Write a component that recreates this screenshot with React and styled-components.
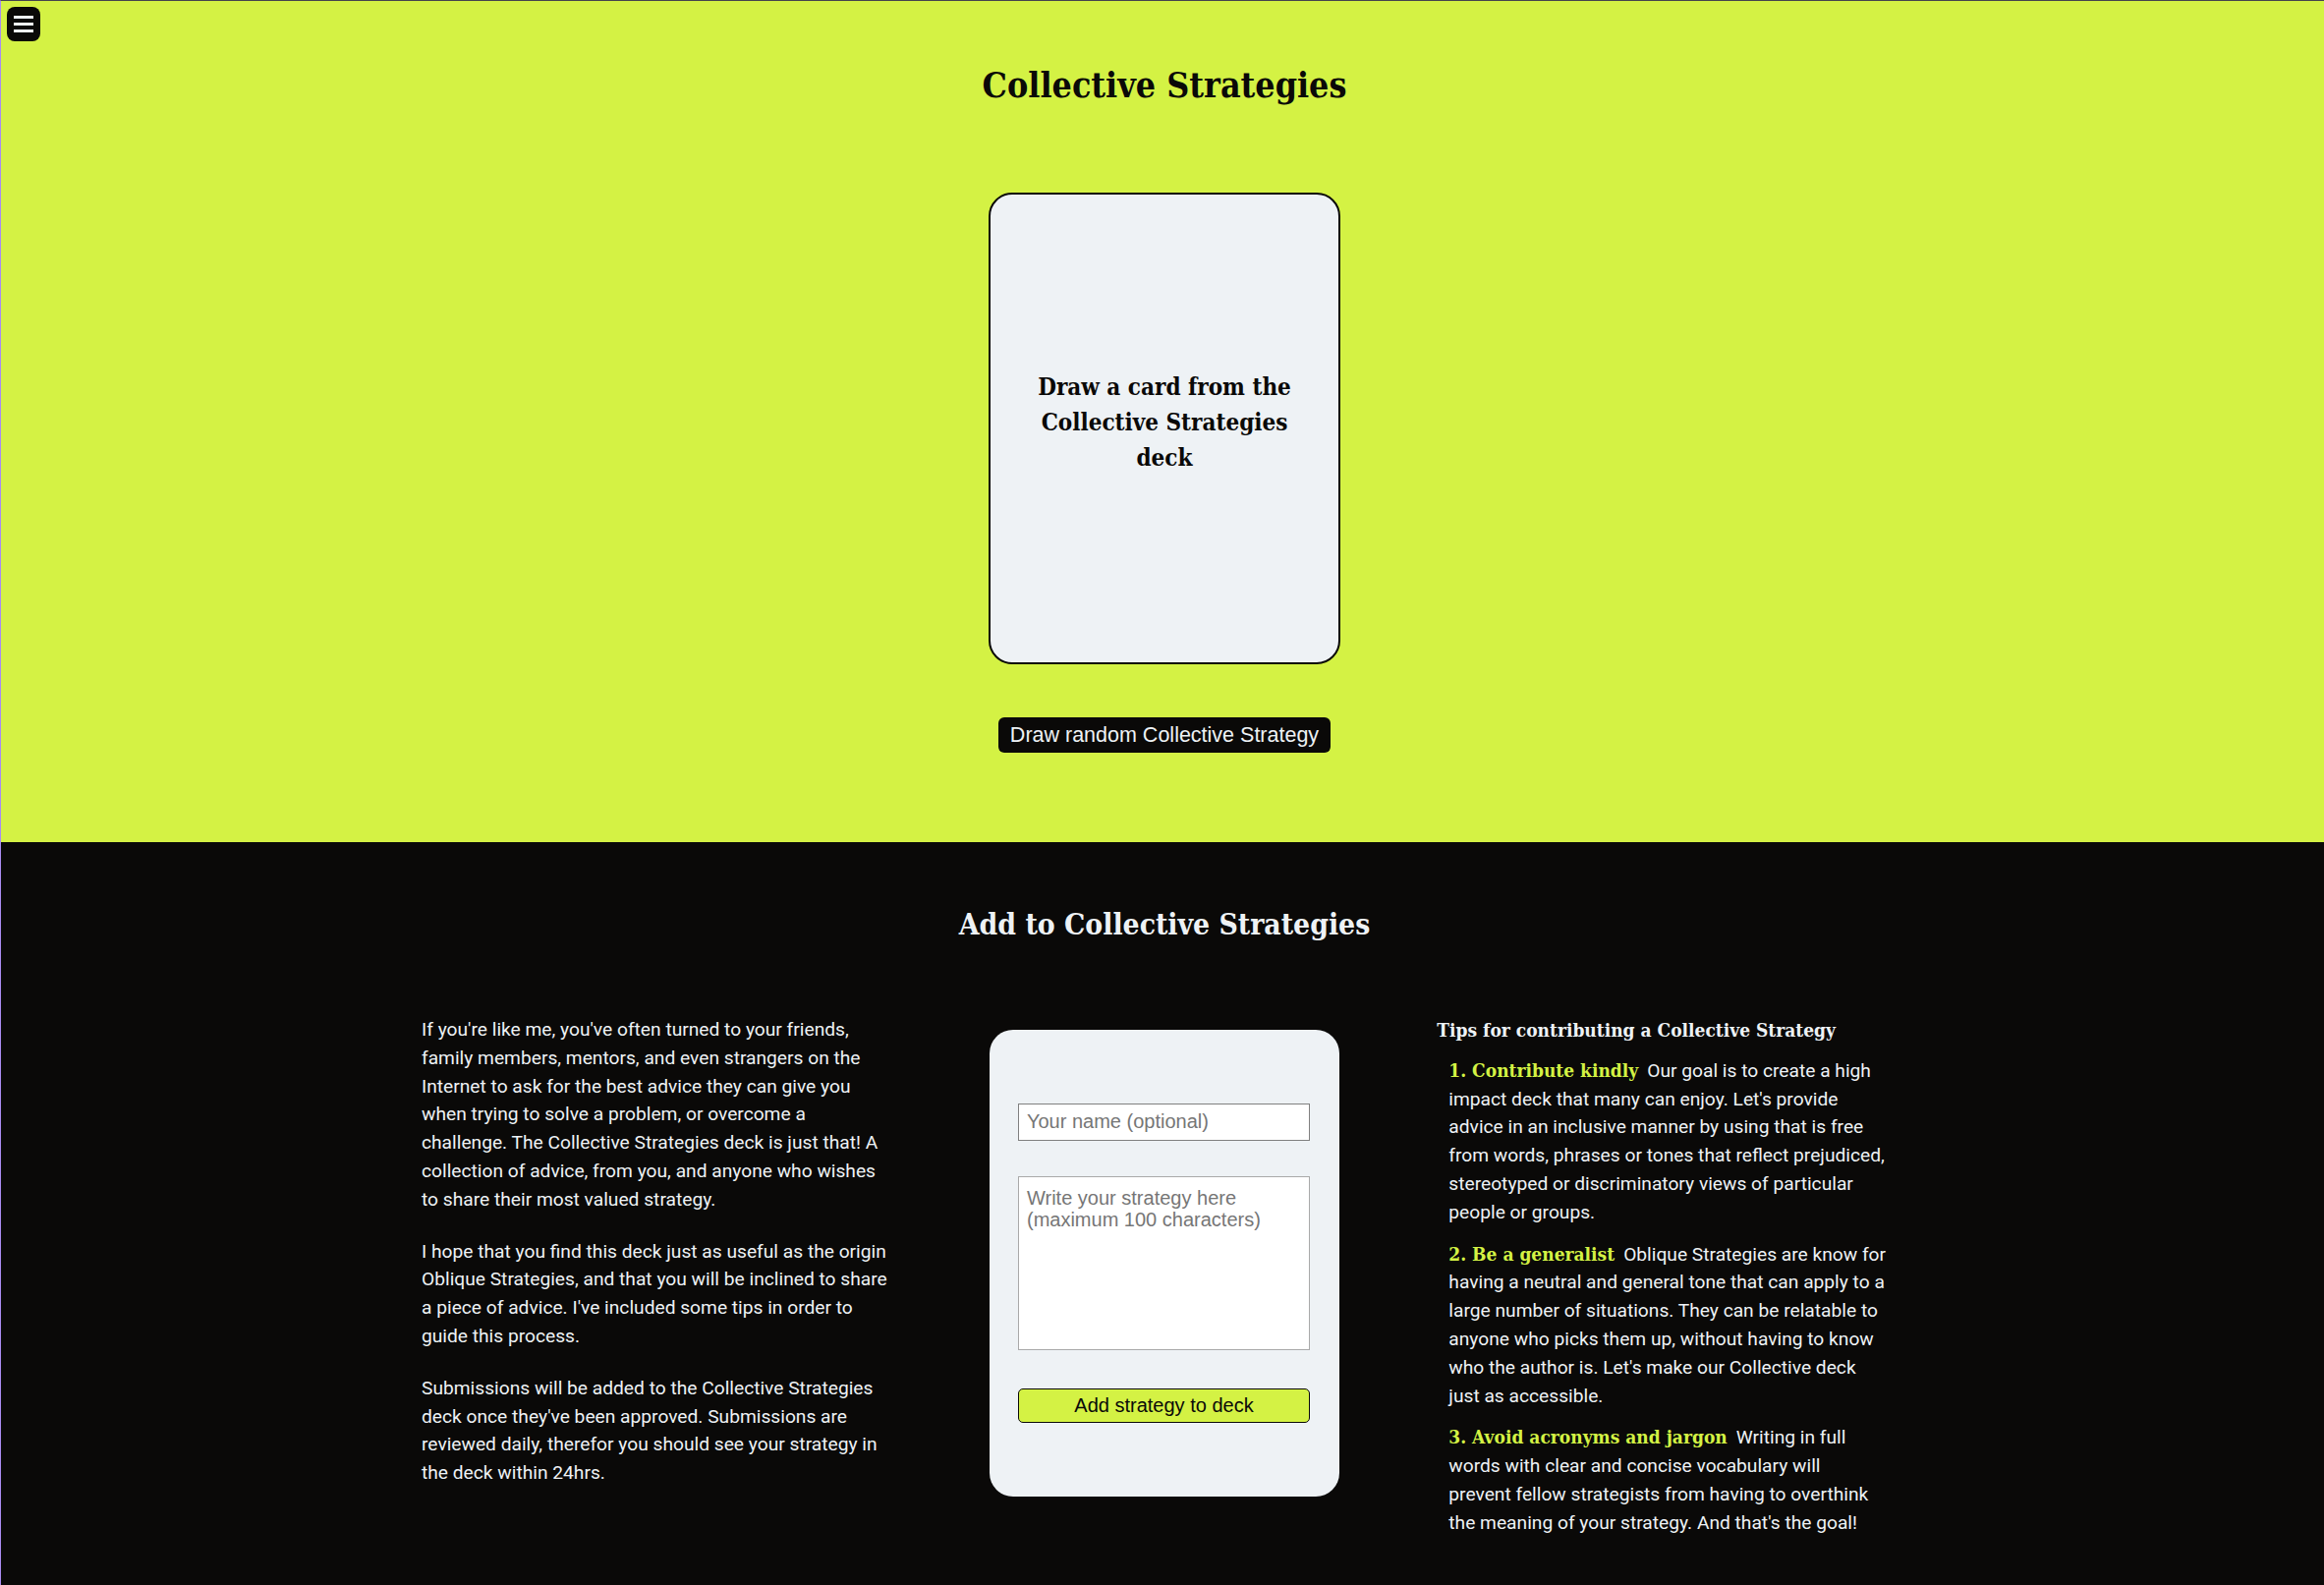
import React from "react";
import styled, { createGlobalStyle } from "styled-components";

const GREEN = "#d4f244";
const INK = "#0a0908";
const PAPER = "#eef2f5";

const serif = `"DejaVu Serif Condensed", "DejaVu Serif", "Liberation Serif", serif`;
const sans = `Roboto, "Noto Sans", Arial, sans-serif`;
const arial = `"Liberation Sans", Arial, sans-serif`;

const GlobalStyle = createGlobalStyle`
  * { box-sizing: border-box; }
  html, body { margin: 0; padding: 0; background: ${INK}; }
  body { font-family: ${sans}; }
`;

const Page = styled.div`
  position: relative;
  border-top: 1px solid #45454d;
  border-left: 1px solid #a98cf0;
  padding-left: 4px;
  min-height: 100vh;
  background: ${INK};
`;

const MenuButton = styled.button`
  position: absolute;
  top: 6px;
  left: 6px;
  width: 34px;
  height: 35px;
  border: none;
  border-radius: 8px;
  background: ${INK};
  padding: 0;
  display: flex;
  flex-direction: column;
  align-items: center;
  justify-content: center;
  gap: 4px;
  cursor: pointer;

  span {
    display: block;
    width: 20px;
    height: 3px;
    background: ${PAPER};
  }
`;

const Hero = styled.section`
  background: ${GREEN};
  margin-left: -4px;
  padding: 64px 0 91px 4px;
  display: flex;
  flex-direction: column;
  align-items: center;
`;

const Title = styled.h1`
  font-family: ${serif};
  font-weight: bold;
  font-size: 35.5px;
  line-height: 43px;
  color: ${INK};
  margin: 0 0 88px;
`;

const DeckCard = styled.div`
  width: 358px;
  height: 480px;
  border: 2px solid ${INK};
  border-radius: 24px;
  background: ${PAPER};
  display: flex;
  align-items: center;
  justify-content: center;
  padding: 0 44px 12px;
  text-align: center;
  font-family: ${serif};
  font-weight: bold;
  font-size: 24px;
  line-height: 36px;
  color: ${INK};
`;

const DrawButton = styled.button`
  margin-top: 54px;
  height: 36px;
  padding: 0 12px;
  border: none;
  border-radius: 6px;
  background: ${INK};
  color: ${PAPER};
  font-family: ${arial};
  font-size: 21.5px;
  cursor: pointer;
`;

const Contribute = styled.section`
  color: ${PAPER};
  padding: 66px 0 50px;
  display: flex;
  flex-direction: column;
  align-items: center;
`;

const SectionTitle = styled.h2`
  font-family: ${serif};
  font-weight: bold;
  font-size: 29.8px;
  line-height: 36px;
  margin: 0 0 75px;
`;

const Columns = styled.div`
  width: 1512px;
  display: grid;
  grid-template-columns: repeat(3, 1fr);
  column-gap: 32px;
  align-items: start;
`;

const Intro = styled.div`
  font-family: ${sans};
  font-size: 19.2px;
  line-height: 28.8px;

  p {
    margin: 0 0 24px;
  }
`;

const FormCard = styled.form`
  justify-self: center;
  margin-top: 14px;
  width: 356px;
  height: 475px;
  border-radius: 24px;
  background: ${PAPER};
  padding: 75px 30px 75px 29px;
  display: flex;
  flex-direction: column;
  gap: 36px;
`;

const field = `
  width: 297px;
  background: #fff;
  font-family: ${arial};
  font-size: 20px;
  color: ${INK};
  padding: 0 8px;
  outline: none;
  &::placeholder { color: #767676; }
`;

const NameInput = styled.input`
  ${field}
  height: 38px;
  border: 1px solid #808080;
`;

const StrategyInput = styled.textarea`
  ${field}
  height: 179px;
  border: 1px solid #a9a9a9;
  padding-top: 10px;
  line-height: 22.5px;
  resize: none;
`;

const AddButton = styled.button`
  margin-top: 3px;
  width: 297px;
  height: 35px;
  border: 1px solid ${INK};
  border-radius: 5px;
  background: ${GREEN};
  color: ${INK};
  font-family: ${arial};
  font-size: 20px;
  cursor: pointer;
`;

const Tips = styled.div`
  padding-left: 4px;
`;

const TipsTitle = styled.h3`
  font-family: ${serif};
  font-weight: bold;
  font-size: 19px;
  line-height: 28.8px;
  margin: 0 0 12px;
`;

const TipList = styled.ol`
  list-style: none;
  margin: 0;
  padding: 0 0 0 12px;
  max-width: 457.5px;
`;

const Tip = styled.li`
  font-family: ${sans};
  font-size: 19.2px;
  line-height: 28.8px;
  margin-bottom: 13px;
`;

const TipName = styled.strong`
  font-family: ${serif};
  font-weight: bold;
  font-size: 19px;
  color: ${GREEN};
  margin-right: 9px;
`;

const tips = [
  {
    name: "1. Contribute kindly",
    text: "Our goal is to create a high impact deck that many can enjoy. Let's provide advice in an inclusive manner by using that is free from words, phrases or tones that reflect prejudiced, stereotyped or discriminatory views of particular people or groups.",
  },
  {
    name: "2. Be a generalist",
    text: "Oblique Strategies are know for having a neutral and general tone that can apply to a large number of situations. They can be relatable to anyone who picks them up, without having to know who the author is. Let's make our Collective deck just as accessible.",
  },
  {
    name: "3. Avoid acronyms and jargon",
    text: "Writing in full words with clear and concise vocabulary will prevent fellow strategists from having to overthink the meaning of your strategy. And that's the goal!",
  },
];

const App = () => {
  return (
    <Page>
      <GlobalStyle />
      <MenuButton aria-label="Menu">
        <span />
        <span />
        <span />
      </MenuButton>

      <Hero>
        <Title>Collective Strategies</Title>
        <DeckCard>Draw a card from the Collective Strategies deck</DeckCard>
        <DrawButton>Draw random Collective Strategy</DrawButton>
      </Hero>

      <Contribute>
        <SectionTitle>Add to Collective Strategies</SectionTitle>
        <Columns>
          <Intro>
            <p>
              If you're like me, you've often turned to your friends, family members, mentors, and even
              strangers on the Internet to ask for the best advice they can give you when trying to solve a
              problem, or overcome a challenge. The Collective Strategies deck is just that! A collection of
              advice, from you, and anyone who wishes to share their most valued strategy.
            </p>
            <p>
              I hope that you find this deck just as useful as the origin Oblique Strategies, and that you
              will be inclined to share a piece of advice. I've included some tips in order to guide this
              process.
            </p>
            <p>
              Submissions will be added to the Collective Strategies deck once they've been approved.
              Submissions are reviewed daily, therefor you should see your strategy in the deck within 24hrs.
            </p>
          </Intro>

          <FormCard onSubmit={(e) => e.preventDefault()}>
            <NameInput placeholder="Your name (optional)" />
            <StrategyInput placeholder="Write your strategy here (maximum 100 characters)" />
            <AddButton type="submit">Add strategy to deck</AddButton>
          </FormCard>

          <Tips>
            <TipsTitle>Tips for contributing a Collective Strategy</TipsTitle>
            <TipList>
              {tips.map((tip) => (
                <Tip key={tip.name}>
                  <TipName>{tip.name}</TipName>
                  {tip.text}
                </Tip>
              ))}
            </TipList>
          </Tips>
        </Columns>
      </Contribute>
    </Page>
  );
};

export default App;
